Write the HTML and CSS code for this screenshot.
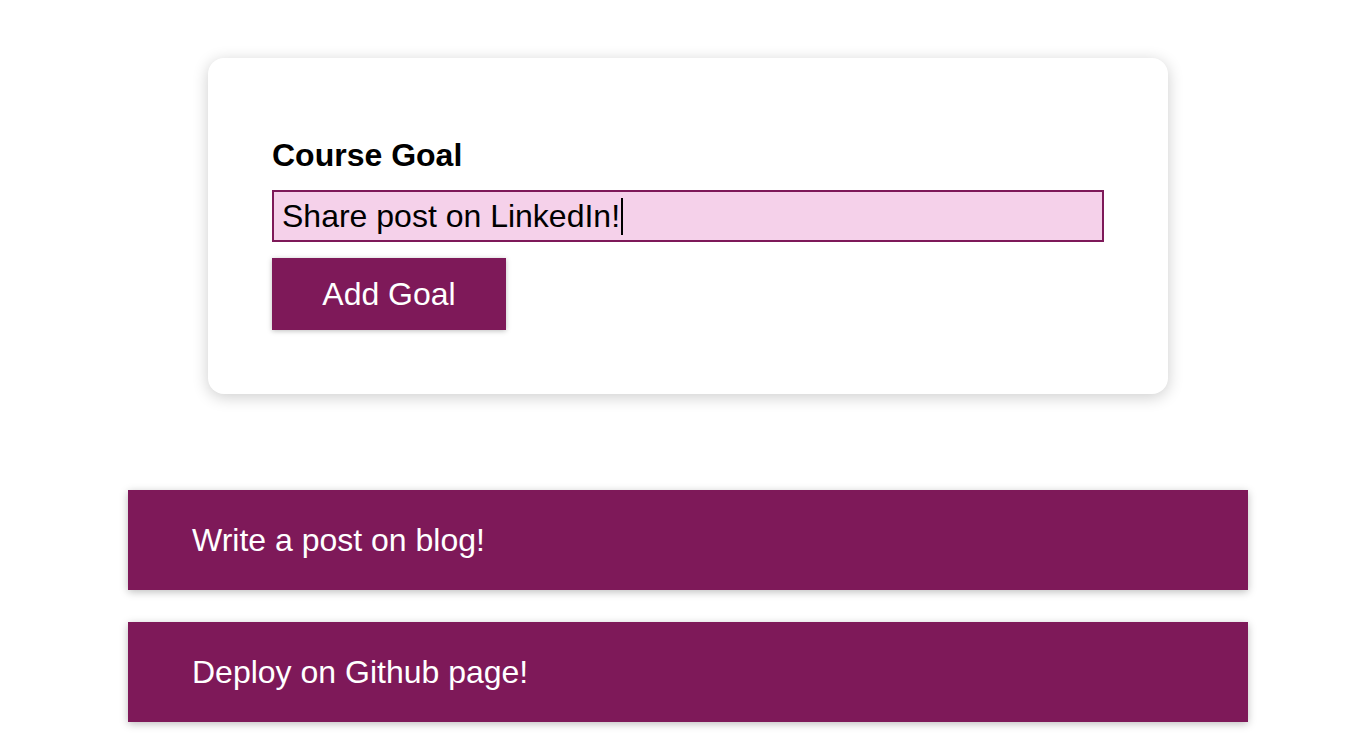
FILE: index.html
```html
<!DOCTYPE html>
<html lang="en">
<head>
<meta charset="utf-8">
<title>Course Goals</title>
<link rel="stylesheet" href="styles.css">
</head>
<body>
<main class="page">
  <section class="goal-form-card">
    <form class="goal-form">
      <label class="form-label" for="goal">Course Goal</label>
      <div class="form-input" id="goal" role="textbox"><span>Share post on LinkedIn!</span><span class="caret"></span></div>
      <button type="button" class="btn">Add Goal</button>
    </form>
  </section>
  <section class="goals">
    <ul class="goal-list">
      <li class="goal-item">Write a post on blog!</li>
      <li class="goal-item">Deploy on Github page!</li>
    </ul>
  </section>
</main>
</body>
</html>
```

FILE: styles.css
```css
* { box-sizing: border-box; }

html, body {
  margin: 0;
  background: #ffffff;
  font-family: "Liberation Sans", Arial, Helvetica, sans-serif;
}

.page {
  display: flex;
  flex-direction: column;
  align-items: center;
  padding: 58px 0 40px 26px;
}

.goal-form-card {
  width: 960px;
  background: #fff;
  border-radius: 16px;
  box-shadow: 0 3px 16px rgba(0, 0, 0, 0.2);
  padding: 73px 64px 64px;
}

.goal-form {
  display: flex;
  flex-direction: column;
  align-items: flex-start;
}

.form-label {
  font-weight: bold;
  font-size: 32px;
  line-height: 48px;
  color: #000;
  margin-bottom: 11px;
}

.form-input {
  width: 832px;
  height: 52px;
  border: 2px solid #7e1959;
  background: #f5d1ea;
  font-size: 32px;
  line-height: 48px;
  padding: 0 8px;
  color: #000;
  display: flex;
  align-items: center;
}

.caret {
  display: inline-block;
  width: 2px;
  height: 37px;
  background: #000;
  margin-left: 1px;
}

.btn {
  margin-top: 16px;
  font: inherit;
  font-size: 32px;
  line-height: 48px;
  width: 234px;
  padding: 12px 0;
  border: none;
  background: #7e1959;
  color: #fff;
  box-shadow: 0 1px 5px rgba(0, 0, 0, 0.26);
  cursor: pointer;
}

.goals {
  margin-top: 96px;
  width: 1120px;
}

.goal-list {
  list-style: none;
  margin: 0;
  padding: 0;
  display: flex;
  flex-direction: column;
  gap: 32px;
}

.goal-item {
  height: 100px;
  display: flex;
  align-items: center;
  padding: 0 64px;
  background: #7e1959;
  color: #fff;
  font-size: 32px;
  line-height: 48px;
  box-shadow: 0 2px 8px rgba(0, 0, 0, 0.26);
}
```
